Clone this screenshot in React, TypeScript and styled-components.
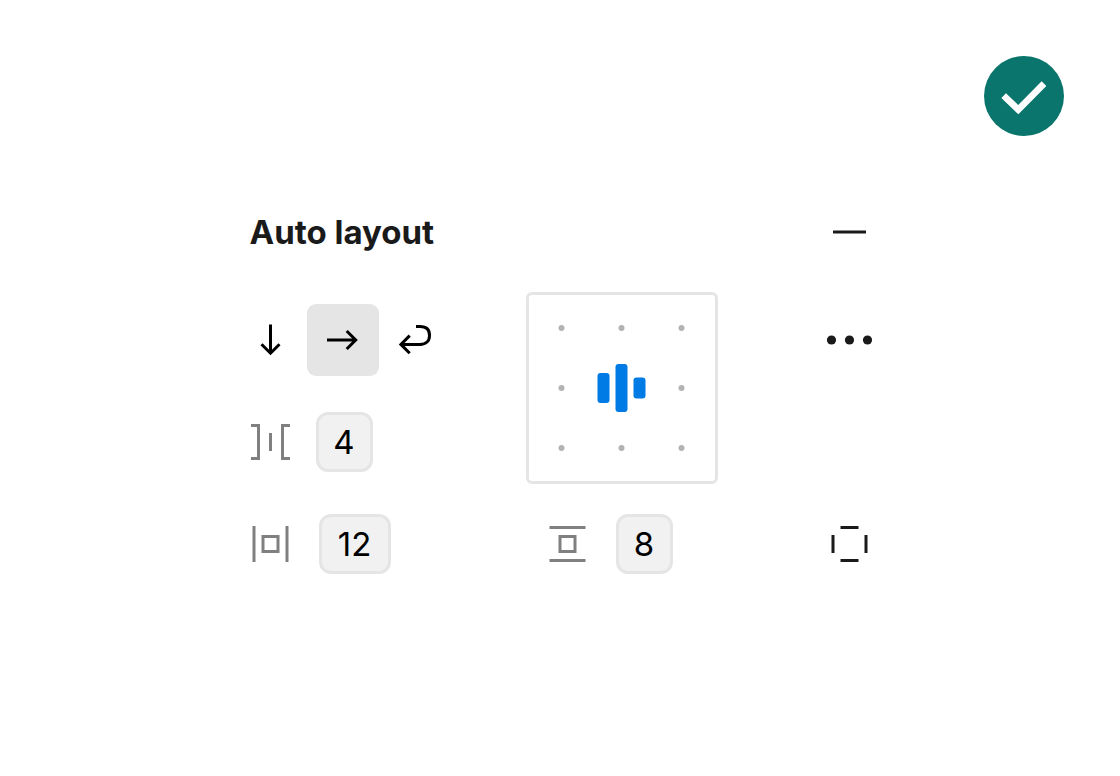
import React, { useState } from "react";
import styled, { createGlobalStyle } from "styled-components";

const GlobalStyle = createGlobalStyle`
  *, *::before, *::after { box-sizing: border-box; }
  body {
    margin: 0;
    background: #ffffff;
    color: #1a1a1a;
    font-family: Inter, "Liberation Sans", sans-serif;
  }
`;

const Page = styled.main`
  min-height: 100vh;
  padding: 56px;
`;

const StatusRow = styled.header`
  display: flex;
  justify-content: flex-end;
  margin-bottom: 60px;
`;

const StatusBadge = styled.svg`
  display: block;
  width: 80px;
  height: 80px;
`;

const Panel = styled.section`
  max-width: 651px;
  margin: 0 auto;
`;

const PanelHeader = styled.div`
  display: flex;
  align-items: center;
  justify-content: space-between;
  margin-bottom: 24px;
  padding-left: 15px;
`;

const Title = styled.h2`
  margin: 0;
  font-size: 33px;
  line-height: 48px;
  font-weight: 700;
`;

const Controls = styled.div`
  display: grid;
  grid-template-columns: 291px 1fr 72px;
  row-gap: 30px;
`;

const Stack = styled.div`
  display: flex;
  flex-direction: column;
  gap: 36px;
  padding: 12px 0;
`;

const ButtonGroup = styled.div`
  display: flex;
`;

const IconButton = styled.button<{ $short?: boolean }>`
  display: block;
  width: 72px;
  height: ${(p) => (p.$short ? 60 : 72)}px;
  padding: 0;
  border: 0;
  border-radius: 9px;
  background: transparent;
  color: #1a1a1a;
  cursor: pointer;
`;

const DirectionButton = styled(IconButton)`
  color: #000000;

  &[aria-pressed="true"] {
    background: #e5e5e5;
  }
`;

const Glyph = styled.svg`
  display: block;
  width: 72px;
  fill: none;
  stroke: currentColor;
  stroke-width: 3px;
`;

const Field = styled.label<{ $gap: number; $inset?: boolean }>`
  display: flex;
  align-items: center;
  gap: ${(p) => p.$gap}px;
  padding-left: ${(p) => (p.$inset ? 6 : 0)}px;
  color: #808080;
`;

const NumberInput = styled.input<{ $wide?: boolean }>`
  width: ${(p) => (p.$wide ? 72 : 57)}px;
  height: 60px;
  padding: 0;
  border: 3px solid #e5e5e5;
  border-radius: 12px;
  background: #f1f1f1;
  color: #000000;
  font-family: inherit;
  font-size: 33px;
  line-height: 48px;
  text-align: center;
`;

const AlignmentGrid = styled.div`
  display: grid;
  grid-template-columns: repeat(3, 60px);
  width: 192px;
  padding: 3px;
  border: 3px solid #e5e5e5;
  border-radius: 6px;
`;

const AlignmentCell = styled.label`
  display: block;
  width: 60px;
  height: 60px;
  cursor: pointer;
`;

const HiddenRadio = styled.input`
  position: absolute;
  margin: 0;
  opacity: 0;
  pointer-events: none;
`;

const CellGlyph = styled.svg`
  display: block;
  width: 60px;
  height: 60px;
`;

const MoreSlot = styled.div`
  padding-top: 12px;
`;

const directions = [
  { name: "Vertical", path: "M36 20.5V49M27 40.2L36 49.2L45 40.2" },
  { name: "Horizontal", path: "M20.5 36H49M40.2 27L49.2 36L40.2 45" },
  {
    name: "Wrap",
    path: "M37.5 22.5H41.5C48 22.5 51 26 51 31.4C51 37 47.5 40.4 41.5 40.4H23M31.2 31.6L22.4 40.4L31.2 49.2",
  },
];

const alignments = [
  "Top left", "Top center", "Top right",
  "Left", "Center", "Right",
  "Bottom left", "Bottom center", "Bottom right",
];

export default function App() {
  const [direction, setDirection] = useState("Horizontal");
  const [alignment, setAlignment] = useState("Center");
  const [gap, setGap] = useState("4");
  const [padX, setPadX] = useState("12");
  const [padY, setPadY] = useState("8");

  return (
    <Page>
      <GlobalStyle />
      <StatusRow>
        <StatusBadge viewBox="0 0 80 80" role="img" aria-label="Correct">
          <circle cx="40" cy="40" r="40" fill="#0a756c" />
          <path d="M19.7 39.6L34.3 53.7L60 27.6" fill="none" stroke="#ffffff" strokeWidth="6.6" />
        </StatusBadge>
      </StatusRow>
      <Panel>
        <PanelHeader>
          <Title>Auto layout</Title>
          <IconButton type="button" aria-label="Remove auto layout">
            <Glyph viewBox="0.5 0 72 72"><path d="M19.5 36H52.5" /></Glyph>
          </IconButton>
        </PanelHeader>
        <Controls>
          <Stack>
            <ButtonGroup>
              {directions.map((d) => (
                <DirectionButton
                  key={d.name}
                  type="button"
                  aria-label={d.name}
                  aria-pressed={direction === d.name}
                  onClick={() => setDirection(d.name)}
                >
                  <Glyph viewBox="0.5 0 72 72"><path d={d.path} /></Glyph>
                </DirectionButton>
              ))}
            </ButtonGroup>
            <Field $gap={9}>
              <Glyph viewBox="0.5 0 72 60">
                <path d="M16.5 13.5H24V46.5H16.5M36 21V39M55.5 13.5H48V46.5H55.5" />
              </Glyph>
              <NumberInput aria-label="Gap" value={gap} onChange={(e) => setGap(e.target.value)} />
            </Field>
          </Stack>
          <AlignmentGrid role="radiogroup" aria-label="Alignment">
            {alignments.map((a) => (
              <AlignmentCell key={a}>
                <HiddenRadio
                  type="radio"
                  name="alignment"
                  aria-label={a}
                  checked={alignment === a}
                  onChange={() => setAlignment(a)}
                />
                <CellGlyph viewBox="0.5 0 60 60">
                  {alignment === a ? (
                    <g fill="#007be5">
                      <rect x="6" y="15" width="12" height="30" rx="3" />
                      <rect x="24" y="6" width="12" height="48" rx="3" />
                      <rect x="42" y="19.5" width="12" height="21" rx="3" />
                    </g>
                  ) : (
                    <circle cx="30" cy="30" r="3" fill="#b3b3b3" />
                  )}
                </CellGlyph>
              </AlignmentCell>
            ))}
          </AlignmentGrid>
          <MoreSlot>
            <IconButton type="button" aria-label="More options">
              <Glyph viewBox="0.5 0 72 72">
                <g fill="currentColor" stroke="none">
                  <circle cx="18" cy="36" r="4.6" />
                  <circle cx="36" cy="36" r="4.6" />
                  <circle cx="54" cy="36" r="4.6" />
                </g>
              </Glyph>
            </IconButton>
          </MoreSlot>
          <Field $gap={12}>
            <Glyph viewBox="0.5 0 72 60">
              <path d="M19.5 12V48M52.5 12V48M28.5 22.5H43.5V37.5H28.5Z" />
            </Glyph>
            <NumberInput $wide aria-label="Horizontal padding" value={padX} onChange={(e) => setPadX(e.target.value)} />
          </Field>
          <Field $gap={12} $inset>
            <Glyph viewBox="0.5 0 72 60">
              <path d="M18 13.5H54M18 46.5H54M28.5 22.5H43.5V37.5H28.5Z" />
            </Glyph>
            <NumberInput aria-label="Vertical padding" value={padY} onChange={(e) => setPadY(e.target.value)} />
          </Field>
          <IconButton $short type="button" aria-label="Individual padding">
            <Glyph viewBox="0.5 0 72 60">
              <path d="M27 13.5H45M27 46.5H45M19.5 21V39M52.5 21V39" />
            </Glyph>
          </IconButton>
        </Controls>
      </Panel>
    </Page>
  );
}
